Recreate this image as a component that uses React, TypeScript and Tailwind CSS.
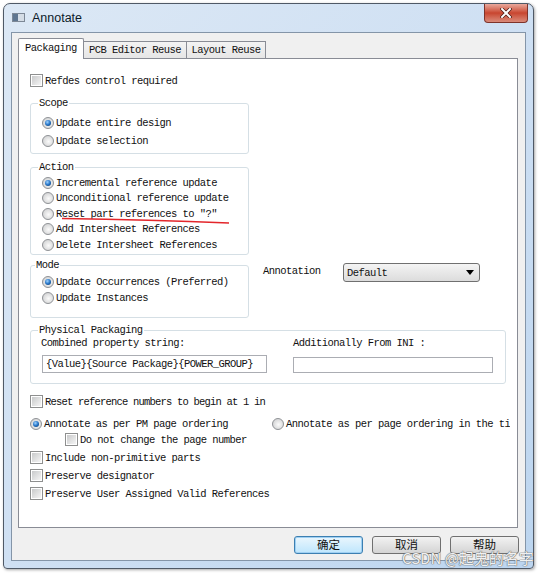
const mono = "font-['Liberation_Mono',monospace] text-[10.5px] leading-[12px] tracking-[-0.55px] text-[#111]"

function Radio({ checked = false }: { checked?: boolean }) {
  return (
    <svg width="12" height="12" viewBox="0 0 12 12" className="shrink-0">
      <defs>
        <radialGradient id="radio-bg" cx="0.55" cy="0.55" r="0.6">
          <stop offset="0" stopColor="#fbfbfb" />
          <stop offset="1" stopColor="#cfd0d1" />
        </radialGradient>
        <radialGradient id="radio-dot" cx="0.4" cy="0.35" r="0.7">
          <stop offset="0" stopColor="#9fd3ff" />
          <stop offset="0.6" stopColor="#2a78c9" />
          <stop offset="1" stopColor="#124a88" />
        </radialGradient>
      </defs>
      <circle cx="6" cy="6" r="5.5" fill="url(#radio-bg)" stroke="#8f9296" strokeWidth="1" />
      {checked && <circle cx="6" cy="6" r="3" fill="url(#radio-dot)" />}
    </svg>
  )
}

function Checkbox() {
  return (
    <div className="h-[13px] w-[13px] shrink-0 border border-[#8e8f8f] bg-white p-[1px]">
      <div className="h-full w-full bg-linear-to-br from-[#c9cacb] to-[#f5f5f5]" />
    </div>
  )
}

function RadioRow({ label, checked, className = 'h-[16px]' }: { label: string; checked?: boolean; className?: string }) {
  return (
    <div className={`flex items-center gap-[2px] ${className}`}>
      <Radio checked={checked} />
      <span className={`${mono} whitespace-nowrap`}>{label}</span>
    </div>
  )
}

function CheckRow({ label, className = '' }: { label: string; className?: string }) {
  return (
    <div className={`flex h-[13px] items-center gap-[2px] ${className}`}>
      <Checkbox />
      <span className={`${mono} whitespace-nowrap`}>{label}</span>
    </div>
  )
}

function GroupLabel({ text, left = 'left-[7px]' }: { text: string; left?: string }) {
  return (
    <span className={`absolute -top-[7px] ${left} bg-white px-px ${mono}`}>{text}</span>
  )
}

export default function App() {
  return (
    <div className="relative h-[577px] w-[554px] overflow-hidden bg-white">
      <div className="ml-[3px] mt-[3px] flex h-[566px] w-[531px] flex-col rounded-t-[7px] rounded-b-[4px] border border-[#4f5966] bg-linear-to-br from-[#dce8f5] via-[#cfe0f3] to-[#bcd5ef] px-[7px] pb-[7px] shadow-[1px_1px_3px_rgba(0,0,0,0.35)]">
        {/* title bar */}
        <div className="flex h-[28px] shrink-0 items-start">
          <div className="ml-[1px] mt-[9px] flex h-[9px] w-[13px] border border-[#7d8896] bg-[#d5dde6]">
            <div className="h-full w-[5px] bg-[#5f7690]" />
          </div>
          <span className="ml-[7px] mt-[7px] font-['Liberation_Sans',sans-serif] text-[12.5px] leading-[15px] text-[#0d1b2a]">
            Annotate
          </span>
          <div className="-mr-[2px] ml-auto flex h-[19px] w-[44px] items-center justify-center rounded-b-[4px] border border-t-0 border-[#7e332a] bg-linear-to-b from-[#e8a89c] via-[#c8452f] to-[#d98a7a]">
            <svg width="12" height="10" viewBox="0 0 12 10">
              <path d="M2 1 L10 9 M10 1 L2 9" stroke="#4a1a14" strokeWidth="3.4" strokeLinecap="square" />
              <path d="M2 1 L10 9 M10 1 L2 9" stroke="#ffffff" strokeWidth="2" strokeLinecap="square" />
            </svg>
          </div>
        </div>

        {/* client area */}
        <div className="flex flex-1 flex-col border border-[#8495a8] bg-[#f0f0f0] pl-[6px] pt-[5px]">
          {/* tabs */}
          <div className="flex h-[21px] items-end">
            <div className={`relative z-10 flex h-[21px] w-[66px] items-center rounded-t-[2px] border border-b-0 border-[#898c95] bg-white pb-[2px] pl-[6px] ${mono}`}>
              Packaging
            </div>
            <div className={`flex h-[18px] w-[103px] items-center justify-center border border-l-0 border-[#898c95] bg-linear-to-b from-[#f3f3f3] to-[#e6e6e6] ${mono}`}>
              PCB Editor Reuse
            </div>
            <div className={`flex h-[18px] w-[79px] items-center justify-center border border-l-0 border-[#898c95] bg-linear-to-b from-[#f3f3f3] to-[#e6e6e6] ${mono}`}>
              Layout Reuse
            </div>
          </div>

          {/* panel */}
          <div className="relative -mt-px flex h-[470px] w-[500px] flex-col border border-[#898c95] bg-white pl-[11px]">
            <CheckRow label="Refdes control required" className="mt-[15px]" />

            {/* Scope */}
            <div className="relative mt-[16px] flex h-[51px] w-[219px] flex-col gap-[2px] rounded-[3px] border border-[#d5dfe5] pl-[11px] pt-[11px]">
              <GroupLabel text="Scope" />
              <RadioRow label="Update entire design" checked />
              <RadioRow label="Update selection" />
            </div>

            {/* Action */}
            <div className="relative mt-[13px] flex h-[88px] w-[219px] flex-col rounded-[3px] border border-[#d5dfe5] pl-[11px] pt-[7px]">
              <GroupLabel text="Action" />
              <RadioRow label="Incremental reference update" checked className="h-[15.5px]" />
              <RadioRow label="Unconditional reference update" className="h-[15.5px]" />
              <div className="relative">
                <RadioRow label={'Reset part references to "?"'} className="h-[15.5px]" />
                <svg className="absolute left-[19px] top-[11px]" width="170" height="8" viewBox="0 0 170 8">
                  <path d="M1 1.5 Q 90 2.5 168 6" fill="none" stroke="#e3262b" strokeWidth="1.3" />
                </svg>
              </div>
              <RadioRow label="Add Intersheet References" className="h-[15.5px]" />
              <RadioRow label="Delete Intersheet References" className="h-[15.5px]" />
            </div>

            {/* Mode + Annotation */}
            <div className="mt-[8px] flex items-start">
              <div className="relative mt-[2px] flex h-[53px] w-[219px] flex-col rounded-[3px] border border-[#d5dfe5] pl-[11px] pt-[8px]">
                <GroupLabel text="Mode" left="left-[4px]" />
                <RadioRow label="Update Occurrences (Preferred)" checked />
                <RadioRow label="Update Instances" />
              </div>
              <span className={`ml-[14px] mt-[2px] w-[80px] ${mono}`}>Annotation</span>
              <div className="flex h-[19px] w-[137px] items-center justify-between rounded-[3px] border border-[#707070] bg-linear-to-b from-[#f4f4f4] to-[#dcdcdc] pl-[3px] pr-[5px]">
                <span className={mono}>Default</span>
                <svg width="8" height="5" viewBox="0 0 8 5">
                  <path d="M0 0 H8 L4 5 Z" fill="#000" />
                </svg>
              </div>
            </div>

            {/* Physical Packaging */}
            <div className="relative mt-[12px] flex h-[54px] w-[476px] rounded-[3px] border border-[#d5dfe5] pt-[6px]">
              <GroupLabel text="Physical Packaging" />
              <div className="flex w-[262px] flex-col pl-[10px]">
                <span className={mono}>Combined property string:</span>
                <div className={`ml-[1px] mt-[6px] flex h-[18px] w-[225px] items-center border border-[#abadb3] pl-[3px] ${mono}`}>
                  {'{Value}{Source Package}{POWER_GROUP}'}
                </div>
              </div>
              <div className="flex flex-col">
                <span className={mono}>Additionally From INI :</span>
                <div className="mt-[8px] h-[16px] w-[200px] border border-[#abadb3]" />
              </div>
            </div>

            {/* Misc options */}
            <div className="mt-[11px] flex h-[13px] w-[239px] items-center gap-[2px] overflow-hidden">
              <Checkbox />
              <span className="whitespace-nowrap font-['Liberation_Mono',monospace] text-[10.5px] leading-[12px] tracking-[-0.8px] text-[#111]">
                Reset reference numbers to begin at 1 in each page
              </span>
            </div>

            <div className="mt-[10px] flex h-[12px] items-center">
              <div className="w-[242px]">
                <RadioRow label="Annotate as per PM page ordering" checked className="h-[12px]" />
              </div>
              <div className="w-[238px] overflow-hidden">
                <RadioRow label="Annotate as per page ordering in the title block" className="h-[12px]" />
              </div>
            </div>
            <CheckRow label="Do not change the page number" className="ml-[35px] mt-[3px]" />
            <CheckRow label="Include non-primitive parts" className="mt-[5px]" />
            <CheckRow label="Preserve designator" className="mt-[5px]" />
            <CheckRow label="Preserve User Assigned Valid References" className="mt-[5px]" />
          </div>

          {/* buttons */}
          <div className="mt-[8px] flex gap-[9px] pl-[276px]">
            <button className="flex h-[18px] w-[69px] items-center justify-center rounded-[3px] border border-[#3c7fb1] bg-linear-to-b from-[#eaf6fd] to-[#bee6fd] font-['Noto_Sans_CJK_SC',sans-serif] text-[11.5px] leading-none text-[#111] shadow-[inset_0_0_0_1px_#9fd0f3]">
              确定
            </button>
            <button className="flex h-[18px] w-[69px] items-center justify-center rounded-[3px] border border-[#707070] bg-linear-to-b from-[#f2f2f2] to-[#d4d4d4] font-['Noto_Sans_CJK_SC',sans-serif] text-[11.5px] leading-none text-[#111]">
              取消
            </button>
            <button className="flex h-[18px] w-[69px] items-center justify-center rounded-[3px] border border-[#707070] bg-linear-to-b from-[#f2f2f2] to-[#d4d4d4] font-['Noto_Sans_CJK_SC',sans-serif] text-[11.5px] leading-none text-[#111]">
              帮助
            </button>
          </div>
        </div>
      </div>

      {/* watermark */}
      <span className="absolute left-[402px] top-[549px] whitespace-nowrap font-['Noto_Sans_CJK_SC',sans-serif] text-[15px] leading-[18px] text-white/90 [text-shadow:0_0_1px_#6b6b6b,0_0_1px_#6b6b6b,0_0_1px_#6b6b6b]">
        CSDN @起鬼的名字
      </span>
    </div>
  )
}
